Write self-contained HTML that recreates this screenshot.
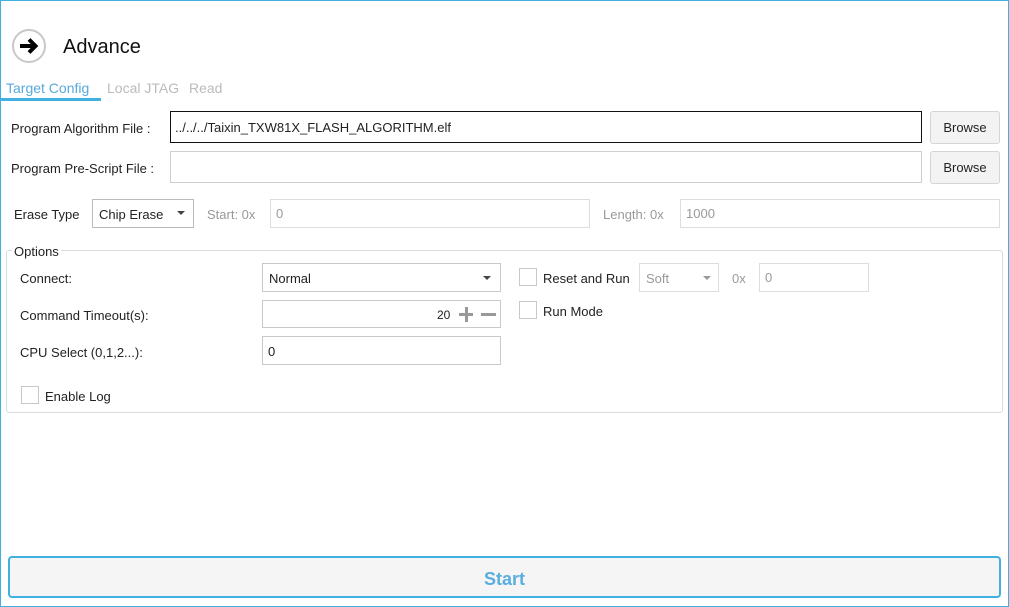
<!DOCTYPE html>
<html><head><meta charset="utf-8"><style>
*{box-sizing:border-box;margin:0;padding:0}
body{width:1009px;height:607px;background:#fff;font-family:"Liberation Sans",sans-serif;font-size:13px;color:#222;position:relative;overflow:hidden}
.a{position:absolute}
.frame{left:0;top:0;width:1009px;height:607px;border:1px solid #41b0e0}
.box{position:absolute;border:1px solid #cfcfcf;background:#fff}
.t{position:absolute;white-space:nowrap}
.btn{position:absolute;border:1px solid #d5d5d5;background:#f3f3f3;border-radius:3px;text-align:center;line-height:32px}
.cb{position:absolute;width:18px;height:18px;border:1px solid #c8c8c8;background:#fff}
.arr{position:absolute;width:0;height:0;border-left:4px solid transparent;border-right:4px solid transparent;border-top:4px solid #444}
</style></head><body>
<div class="a frame"></div>
<svg class="a" style="left:11px;top:28px" width="36" height="36" viewBox="0 0 36 36"><circle cx="18" cy="18" r="16" fill="#fff" stroke="#c8c8c8" stroke-width="2"/><path d="M9 18H24M18 11.5L24.5 18L18 24.5" stroke="#000" stroke-width="4" fill="none" stroke-linejoin="miter"/></svg>
<div class="t" style="left:63px;top:36px;font-size:20px;color:#111">Advance</div>
<div class="t" style="left:6px;top:80px;font-size:14px;color:#57a9dc">Target Config</div>
<div class="t" style="left:107px;top:80px;font-size:14px;color:#bbb">Local JTAG</div>
<div class="t" style="left:189px;top:80px;font-size:14px;color:#bbb">Read</div>
<div class="a" style="left:1px;top:98px;width:100px;height:3px;background:#41b0e0"></div>

<div class="t" style="left:11px;top:121px">Program Algorithm File :</div>
<div class="box" style="left:170px;top:111px;width:752px;height:32px;border-color:#111"></div>
<div class="t" style="left:175px;top:120px">../../../Taixin_TXW81X_FLASH_ALGORITHM.elf</div>
<div class="btn" style="left:930px;top:111px;width:70px;height:33px">Browse</div>

<div class="t" style="left:11px;top:161px">Program Pre-Script File :</div>
<div class="box" style="left:170px;top:151px;width:752px;height:32px"></div>
<div class="btn" style="left:930px;top:151px;width:70px;height:33px">Browse</div>

<div class="t" style="left:14px;top:207px">Erase Type</div>
<div class="box" style="left:92px;top:199px;width:102px;height:29px;border-color:#bbb"></div>
<div class="t" style="left:99px;top:207px">Chip Erase</div>
<div class="arr" style="left:177px;top:211px"></div>
<div class="t" style="left:207px;top:207px;color:#999">Start: 0x</div>
<div class="box" style="left:270px;top:199px;width:320px;height:29px;border-color:#ddd"></div>
<div class="t" style="left:276px;top:206px;color:#999">0</div>
<div class="t" style="left:603px;top:207px;color:#999">Length: 0x</div>
<div class="box" style="left:680px;top:199px;width:320px;height:29px;border-color:#ddd"></div>
<div class="t" style="left:686px;top:206px;color:#999">1000</div>

<div class="a" style="left:6px;top:250px;width:997px;height:163px;border:1px solid #d8dde2;border-radius:3px"></div>
<div class="t" style="left:12px;top:244px;background:#fff;padding:0 2px">Options</div>

<div class="t" style="left:20px;top:271px">Connect:</div>
<div class="box" style="left:262px;top:263px;width:239px;height:29px;border-color:#c8c8c8"></div>
<div class="t" style="left:269px;top:271px">Normal</div>
<div class="arr" style="left:483px;top:276px"></div>

<div class="t" style="left:20px;top:308px">Command Timeout(s):</div>
<div class="box" style="left:262px;top:300px;width:239px;height:28px;border-color:#c8c8c8"></div>
<div class="t" style="left:437px;top:308px;font-size:12px">20</div>
<div class="a" style="left:459px;top:313px;width:14px;height:3px;background:#999"></div>
<div class="a" style="left:464.5px;top:307px;width:3px;height:15px;background:#999"></div>
<div class="a" style="left:481px;top:313px;width:15px;height:3px;background:#999"></div>

<div class="t" style="left:20px;top:345px">CPU Select (0,1,2...):</div>
<div class="box" style="left:262px;top:336px;width:239px;height:29px;border-color:#c8c8c8"></div>
<div class="t" style="left:268px;top:344px">0</div>

<div class="cb" style="left:21px;top:386px"></div>
<div class="t" style="left:45px;top:389px">Enable Log</div>

<div class="cb" style="left:519px;top:268px"></div>
<div class="t" style="left:543px;top:271px">Reset and Run</div>
<div class="box" style="left:639px;top:263px;width:80px;height:29px;border-color:#ddd"></div>
<div class="t" style="left:646px;top:271px;color:#999">Soft</div>
<div class="arr" style="left:703px;top:276px;border-top-color:#999"></div>
<div class="t" style="left:732px;top:271px;color:#999">0x</div>
<div class="box" style="left:759px;top:263px;width:110px;height:29px;border-color:#ddd"></div>
<div class="t" style="left:765px;top:270px;color:#999">0</div>
<div class="cb" style="left:519px;top:301px"></div>
<div class="t" style="left:543px;top:304px">Run Mode</div>

<div class="a" style="left:8px;top:556px;width:993px;height:42px;border:2px solid #41b0e0;border-radius:4px;background:#f5f5f5;text-align:center;line-height:42px;color:#5aaedf;font-weight:bold;font-size:18px">Start</div>
</body></html>
